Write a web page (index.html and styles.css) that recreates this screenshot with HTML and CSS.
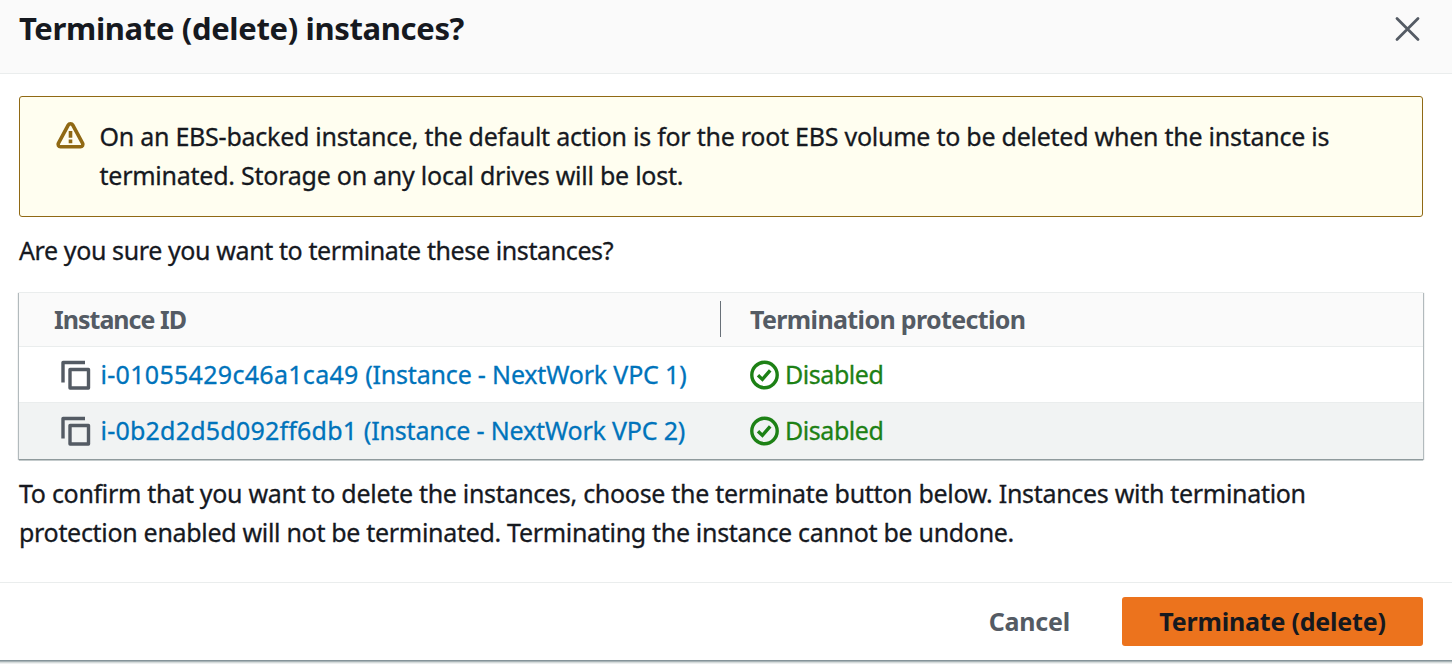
FILE: index.html
```
<!DOCTYPE html>
<html lang="en">
<head>
<meta charset="utf-8">
<title>Terminate instances</title>
<link rel="stylesheet" href="styles.css">
</head>
<body>
<div class="modal">
  <header class="modal-header">
    <h1 class="title">Terminate (delete) instances?</h1>
    <svg class="close" width="28" height="28" viewBox="0 0 28 28"><path d="M4 3.500l21 21M25 3.500l-21 21"/></svg>
  </header>
  <main class="modal-body">
    <div class="alert">
      <svg class="warn" width="32" height="32" viewBox="0 0 32 32"><path d="M14.200 5.100a2.600 2.600 0 0 1 4.600 0l9.700 18a2.400 2.400 0 0 1-2.100 3.700H6.600a2.400 2.400 0 0 1-2.100-3.700z"/><path d="M16.500 11v6.700M16.500 19.600v3.600"/></svg>
      <p class="alert-text"><span class="a1">On an EBS-backed instance, the default action is for the root EBS volume to be deleted when the instance is</span><br><span class="a2">terminated. Storage on any local drives will be lost.</span></p>
    </div>
    <p class="question">Are you sure you want to terminate these instances?</p>
    <div class="table">
      <div class="row head">
        <div class="cell id-head">Instance ID</div>
        <div class="cell second prot-head">Termination protection</div>
      </div>
      <div class="row">
        <div class="cell first">
          <svg class="copy" width="30" height="30" viewBox="0 0 30 30"><path d="M2 22.500V2.500h22"/><path d="M9 9.500h18.500v18.500H9z"/></svg>
          <a class="link"><span class="id1">i-01055429c46a1ca49</span> <span class="name">(Instance - NextWork VPC 1)</span></a>
        </div>
        <div class="cell second status">
          <svg class="ok" width="30" height="30" viewBox="0 0 30 30"><circle cx="14.500" cy="15" r="12.700"/><path d="M8 15.200l4.400 4.200 7.800-9"/></svg>
          <span>Disabled</span>
        </div>
      </div>
      <div class="row striped">
        <div class="cell first">
          <svg class="copy" width="30" height="30" viewBox="0 0 30 30"><path d="M2 22.500V2.500h22"/><path d="M9 9.500h18.500v18.500H9z"/></svg>
          <a class="link"><span class="id2">i-0b2d2d5d092ff6db1</span> <span class="name">(Instance - NextWork VPC 2)</span></a>
        </div>
        <div class="cell second status">
          <svg class="ok" width="30" height="30" viewBox="0 0 30 30"><circle cx="14.500" cy="15" r="12.700"/><path d="M8 15.200l4.400 4.200 7.800-9"/></svg>
          <span>Disabled</span>
        </div>
      </div>
    </div>
    <p class="confirm"><span class="c1">To confirm that you want to delete the instances, choose the terminate button below. Instances with termination</span><br><span class="c2">protection enabled will not be terminated. Terminating the instance cannot be undone.</span></p>
  </main>
  <footer class="modal-footer">
    <button class="btn cancel">Cancel</button>
    <button class="btn primary">Terminate (delete)</button>
  </footer>
</div>
</body>
</html>
```
FILE: styles.css
```
* { box-sizing: border-box; }
body {
  margin: 0;
  height: 664px;
  overflow: hidden;
  background: #eef0f0;
  color: #16191f;
  font: 25px/39px "Noto Sans", "Open Sans", sans-serif;
  white-space: nowrap;
}
p, h1 { margin: 0; }
p, .link, .status { -webkit-text-stroke: 0.3px currentColor; }
svg { flex: none; fill: none; }

.modal {
  display: flex;
  flex-direction: column;
  height: 660px;
  background: #fff;
  box-shadow: 0 1px 0 #85949a, 0 2px 0 #a9b4b7, 0 3px 0 #d5dbdb;
}

.modal-header {
  display: flex;
  justify-content: space-between;
  height: 74px;
  padding: 9px 31px 0 19px;
  background: #fafafa;
  border-bottom: 1px solid #eaeded;
}
.title { font-size: 31px; line-height: 39px; letter-spacing: -0.35px; }
.close { margin-top: 6px; stroke: #545b64; stroke-width: 2.8; stroke-linecap: round; }

.modal-body { flex: 1; padding: 22px 29px 0 19px; }

.alert {
  display: flex;
  height: 121px;
  padding: 20px 34px 0 34px;
  background: #fffef0;
  border: 1px solid #906914;
  border-radius: 3px;
}
.warn { margin-top: 3px; stroke: #906914; stroke-width: 3.6; }
.alert-text { margin-left: 13.500px; }
.a1 { letter-spacing: -0.25px; }
.a2 { letter-spacing: -0.245px; }

.question { margin-top: 14px; letter-spacing: -0.39px; }

.table {
  margin-top: 22px;
  height: 167px;
  border-top: 1px solid #eaeded;
  box-shadow: 0 1px 0 0 #8f9a9c, 0 2px 0 0 #c4cbcc, 1px 1px 1px 0 rgba(0, 28, 36, 0.3), -1px 1px 1px 0 rgba(0, 28, 36, 0.3);
}
.row {
  display: grid;
  grid-template-columns: 702px 1fr;
  align-items: center;
  height: 56px;
  background: #fff;
  border-bottom: 1px solid #eaeded;
}
.row.head { height: 54px; padding-bottom: 1px; background: #fafafa; color: #545b64; font-weight: 700; line-height: 37px; }
.row.striped { background: #f1f3f3; border-bottom-color: #f1f3f3; }
.cell { display: flex; align-items: center; }
.id-head {
  height: 36px;
  padding-left: 35px;
  border-right: 1px solid #687078;
  letter-spacing: -1px;
}
.second { padding-left: 29px; }
.prot-head { height: 36px; letter-spacing: -0.64px; }
.first { padding-left: 42px; }
.copy { stroke: #545b64; stroke-width: 3.4; stroke-linejoin: round; }
.link { margin-left: 9.500px; color: #0073bb; }
.id1 { letter-spacing: 0.3px; }
.id2 { letter-spacing: 0.22px; }
.name { letter-spacing: -0.18px; }
.status { color: #1d8115; letter-spacing: -0.45px; }
.status span { margin-left: 5px; }
.ok { stroke: #1d8115; stroke-width: 3.4; }

.confirm { margin-top: 15px; }
.c1 { letter-spacing: -0.3px; }
.c2 { letter-spacing: -0.31px; }

.modal-footer {
  display: flex;
  justify-content: flex-end;
  height: 78px;
  padding: 14px 29px 0;
  border-top: 1px solid #eaeded;
}
.btn {
  height: 49px;
  padding: 0;
  border: 0;
  border-radius: 3px;
  background: transparent;
  font: 700 25px/49px "Noto Sans", "Open Sans", sans-serif;
  letter-spacing: -0.2px;
}
.cancel { margin-right: 52px; color: #545b64; }
.primary { width: 301px; background: #ec731d; color: #16191f; }
```
